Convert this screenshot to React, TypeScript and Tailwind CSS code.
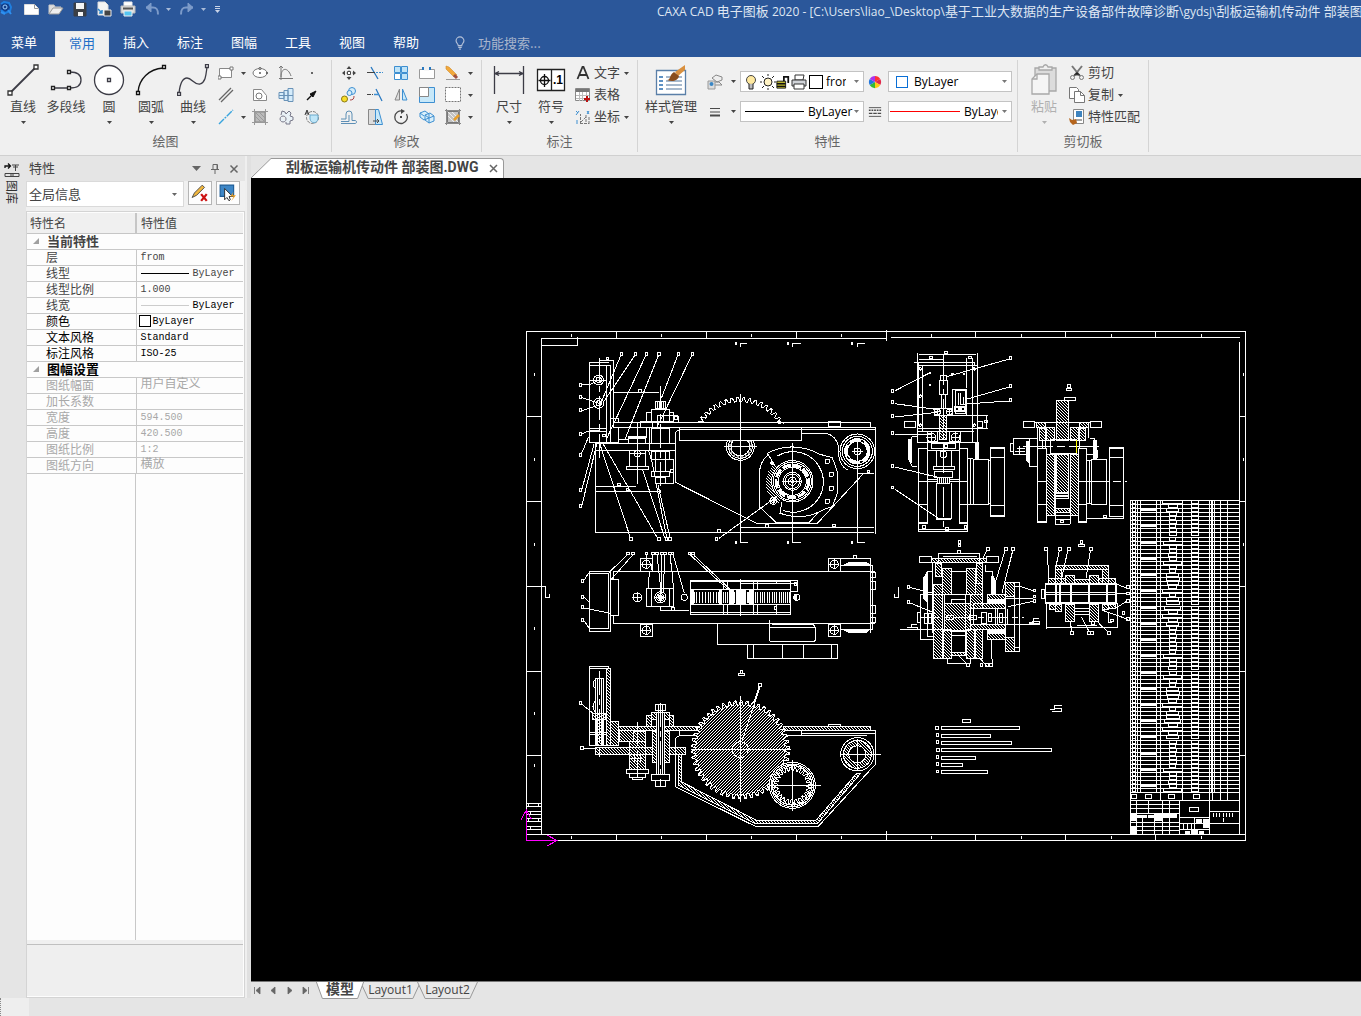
import React from "react";

/* ---------- shared bits ---------- */

const Icon = ({ children, className = "size-4" }: { children: React.ReactNode; className?: string }) => (
  <svg viewBox="0 0 16 16" className={`${className} shrink-0`} fill="none" stroke="#4a4a4a" aria-hidden="true">
    {children}
  </svg>
);

const Caret = ({ className = "text-[#444]" }: { className?: string }) => (
  <svg viewBox="0 0 5 3" className={`h-[3px] w-[5px] shrink-0 ${className}`} fill="currentColor" aria-hidden="true">
    <path d="M0 0h5L2.5 3z" />
  </svg>
);

const BigButton = ({ label, icon, width = "w-[42px]", caret = true, disabled = false }: { label: string; icon: React.ReactNode; width?: string; caret?: boolean; disabled?: boolean }) => (
  <button type="button" disabled={disabled} className={`${width} flex shrink-0 flex-col items-center ${disabled ? "text-[#b0b0b0]" : "text-[#444]"}`}>
    <span className="flex h-9 items-center justify-center">{icon}</span>
    <span className="h-[18px] text-[13px] leading-4 whitespace-nowrap">{label}</span>
    <span className="flex h-3 items-center">{caret && <Caret className={disabled ? "text-[#b0b0b0]" : "text-[#444]"} />}</span>
  </button>
);

const SmallButton = ({ name, children }: { name: string; children: React.ReactNode }) => (
  <button type="button" aria-label={name} className="flex h-[22px] w-[26px] items-center justify-center">
    {children}
  </button>
);

const CaretButton = ({ name }: { name: string }) => (
  <button type="button" aria-label={name} className="flex h-[22px] w-2 items-center justify-center">
    <Caret />
  </button>
);

const RowButton = ({ label, icon, caret = false }: { label: string; icon: React.ReactNode; caret?: boolean }) => (
  <button type="button" className="flex h-[22px] items-center text-[13px] leading-[18px] whitespace-nowrap text-[#444]">
    {icon}
    <span className="ml-[3px] pb-[2px]">{label}</span>
    {caret && <span className="ml-1"><Caret /></span>}
  </button>
);

const Group = ({ title, children, className = "" }: { title: string; children: React.ReactNode; className?: string }) => (
  <section aria-label={title} className="flex shrink-0 py-[3px]">
    <div className="flex flex-col">
      <div className={`flex h-[72px] pt-[2px] ${className}`}>{children}</div>
      <div className="text-center text-[13px] leading-[18px] text-[#666]">{title}</div>
    </div>
    <div className="w-px bg-[#d4d4d4]" />
  </section>
);

const sq = (x: number, y: number, s = 4) => `M${x - s / 2} ${y - s / 2}h${s}v${s}h-${s}z`;

/* ---------- ribbon icons ---------- */

const Large = ({ children }: { children: React.ReactNode }) => (
  <svg viewBox="0 0 32 32" className="size-8" fill="none" stroke="#3c3c46" strokeWidth="1.3" aria-hidden="true">
    {children}
  </svg>
);

const LineIcon = <Large><path d="M4 28L28 4" strokeWidth="1.8" /><path d={sq(3, 29) + sq(29, 3)} fill="#fff" stroke="#333" /></Large>;
const PolyIcon = <Large><path d="M3 24h17c7 0 11-3 11-8s-4-8-11-8" strokeWidth="1.3" /><path d={sq(3, 24, 3) + sq(19, 24, 3) + sq(19, 8, 3)} fill="#fff" stroke="#222" /></Large>;
const CircleIcon = <Large><circle cx="16" cy="16" r="14.5" fill="#fff" /><path d={sq(16, 16, 3)} /></Large>;
const ArcIcon = <Large><path d="M3 28C4 15 14 5 28 4" stroke="#111" /><path d={sq(3, 29, 3) + sq(29, 3, 3)} fill="#fff" stroke="#111" /></Large>;
const CurveIcon = <Large><path d="M2 29C3 20 5 14 10 14s7 7 13 6c6-2 6-10 7-17" /><path d={sq(2, 30, 3) + sq(30, 2, 3)} fill="#fff" /></Large>;
const DimIcon = <Large><path d="M1.500 2v28M30.500 2v28M3 9.500h26M6 7.500l-4 2 4 2M26 7.500l4 2-4 2" /></Large>;
const SymbolIcon = (
  <span className="relative flex">
    <Large><path d="M2.500 5.500h27v21h-27zM16.500 5.500v21" fill="#fff" stroke="#222" /><circle cx="9.500" cy="16.500" r="4" stroke="#111" /><path d="M3.500 16.500h12M9.500 10v13" stroke="#111" /></Large>
    <span className="absolute top-2 right-1 font-['Liberation_Sans'] text-[12px] leading-4 font-bold text-black">.1</span>
  </span>
);
const StyleIcon = (
  <Large>
    <path d="M1.500 6.500h29v24h-29z" fill="#fff" stroke="#5a7fa8" />
    <path d="M4 13h4M4 17h4M4 21h4M4 25h4" stroke="#2a6db0" />
    <path d="M11 13h16M11 17h16M11 21h16M11 25h16" stroke="#8aa3bd" />
    <path d="M20 8L30 1v5l-7 6z" fill="#d9903f" stroke="none" />
    <path d="M12 16c4 0 2-5 7-8l5 4c-1 5-7 6-12 4z" fill="#8a4d1c" stroke="none" />
  </Large>
);
const PasteIcon = (
  <Large>
    <path d="M7 4h21v23H7z" fill="#dcdcdc" stroke="#a8a8a8" />
    <path d="M11 6V3h4c1-3 4-3 5 0h4v3z" fill="#f0f0f0" stroke="#a8a8a8" />
    <path d="M9 10h12v20H4V15z" fill="#f5f5f5" stroke="#a8a8a8" /><path d="M9 10v5H4" stroke="#a8a8a8" />
  </Large>
);

const drawIcons: [string, React.ReactNode][][] = [
  [
    ["矩形", <Icon><path d="M1.500 3.500h12v9h-12z" fill="#fff" stroke="#888" /><path d="M0 11h3v3H0zM12 2h3v3h-3z" fill="#fff" stroke="#777" /></Icon>],
    ["椭圆", <Icon><ellipse cx="8" cy="8" rx="7" ry="4.500" fill="#fff" stroke="#777" /><circle cx="8" cy="8" r=".6" /><circle cx="8" cy="3.500" r="1" fill="#fff" /><circle cx="15" cy="8" r=".7" fill="#fff" /></Icon>],
    ["公式曲线", <Icon><path d="M3 1v14M1 13.500h14M1 3l2-2 2 2M3 12C3 2 10 2 13 11" stroke="#777" /></Icon>],
    ["点", <Icon><path d="M7 7h2v2H7z" fill="#666" stroke="none" /></Icon>],
  ],
  [
    ["平行线", <Icon><path d="M1 13L13 1M3 15L15 3" stroke="#666" strokeWidth="1.300" /></Icon>],
    ["局部放大", <Icon><path d="M1.500 2.500h8l5 6v5h-13z" fill="#fff" stroke="#888" /><circle cx="7" cy="9" r="3" stroke="#777" /></Icon>],
    ["轴", <Icon><path d="M1 5.500h5v6H1zM6 3.500h4v10H6zM10 1.500h5v13h-5zM1 8.500h14" fill="#d5ecfb" stroke="#6a93b8" /></Icon>],
    ["箭头", <Icon><path d="M3 13l5-5" stroke="#111" strokeWidth="1.500" /><path d="M12 4L6 7l3 3z" fill="#111" stroke="#111" /></Icon>],
  ],
  [
    ["中心线", <Icon><path d="M1 15L15 1" stroke="#39a4dd" strokeWidth="1.400" strokeDasharray="7 1 2 1" /></Icon>],
    ["填充", <Icon><path d="M3 3h10v10H3z" fill="#bbb" stroke="#888" /><path d="M3 3l10 10M3 7l6 6M7 3l6 6" stroke="#9a9a9a" /><path d="M2.500 0v16M13.500 0v16M0 2.500h16M0 13.500h16" stroke="#999" /></Icon>],
    ["齿形", <Icon><path d="M3 6l1-4 3 1 1 2 3-3 2 2-1 3 3 1v3l-3 1v3h-4v-2M5 7a3 3 0 1 0 .1 0" fill="#e9f1f6" stroke="#778" /></Icon>],
    ["图库", <Icon><circle cx="8.500" cy="8.500" r="6" strokeDasharray="3 1" stroke="#777" /><path d="M6 6h8v4c-1 5-7 5-8 0z" fill="#bfe6f8" stroke="#6ba9cb" /><path d="M1 6l2-5 2 5M2 4h2" stroke="#333" /></Icon>],
  ],
];

const B = "#3d8fd1";
const modifyIcons: [string, React.ReactNode][][] = [
  [
    ["平移", <Icon><path d="M8 3v10M3 8h10" stroke="#999" strokeDasharray="1 1" /><path d="M8 1L5.500 4h5zM8 15l-2.500-3h5zM1 8l3-2.500v5zM15 8l-3-2.500v5z" fill="#444" stroke="none" /><path d="M6.500 6.500h3v3h-3z" fill="#fff" /></Icon>],
    ["裁剪", <Icon><path d="M4 2l7 12" stroke="#2878c0" strokeWidth="1.300" /><path d="M0 7.500h8" stroke="#444" /><path d="M9 7.500h7" stroke={B} strokeDasharray="2 1" /></Icon>],
    ["阵列", <Icon><path d="M1.500 1.500h6v6h-6zM8.500 1.500h6v6h-6zM8.500 8.500h6v6h-6z" fill="#bfe3f7" stroke={B} /><path d="M1.500 8.500h6v6h-6z" fill="#fff" stroke={B} /></Icon>],
    ["打断", <Icon><path d="M.500 4.500h15v9H.500z" fill="#fff" stroke="#999" /><path d="M5 4.500h5" stroke="#f0f0f0" strokeWidth="2" /><path d="M4 2v3M11 2v3" stroke="#2878c0" strokeWidth="2" /></Icon>],
    ["删除", <Icon><path d="M1 1l3 1 8 8-3 2-8-8z" fill="#f2a93b" stroke="#d08a2c" strokeWidth=".6" /><path d="M9 10l3 3" stroke="#a05040" strokeWidth="3" /><path d="M1 14.500h14" stroke="#999" /></Icon>],
  ],
  [
    ["复制", <Icon><circle cx="11" cy="4" r="3.500" fill="#d5edfa" stroke={B} /><circle cx="8.500" cy="6" r="2.500" fill="#d5edfa" stroke={B} /><circle cx="3.500" cy="12" r="3" fill="#f7de2c" stroke="#8a7a14" /><path d="M9 13c3 0 4-1 4-4" stroke="#a44" /></Icon>],
    ["延伸", <Icon><path d="M9 2l6 12" stroke="#2878c0" strokeWidth="1.300" /><path d="M0 7.500h6" stroke="#444" strokeDasharray="4 1" /><path d="M7 7.500h5" stroke={B} strokeWidth="1.500" /></Icon>],
    ["镜像", <Icon><path d="M6.500 2v11H2z" fill="#ddd" stroke="#888" /><path d="M9.500 2v11H14z" fill="#cbe9f9" stroke={B} /></Icon>],
    ["缩放", <Icon><path d="M.500.500h15v15H.500z" fill="#c7e8f9" stroke={B} /><path d="M.500.500h9v9h-9z" fill="#fff" stroke="#888" /></Icon>],
    ["拉伸框", <Icon><path d="M.500.500h15v14H.500z" fill="#fff" stroke="#777" strokeDasharray="2 1" /></Icon>],
  ],
  [
    ["偏移", <Icon><path d="M0 14.500h14c2 0 2-3 0-3h-3V5a3 3 0 0 0-6 0v5H0M0 12.500h8V6" stroke="#5d8fb5" /></Icon>],
    ["拉伸", <Icon><path d="M1.500.500h7v15h-7z" fill="#ddd" stroke="#888" /><path d="M8.500.500h3l4 15h-7z" fill="#c7e8f9" stroke={B} /><path d="M6 12h6M10 10l2 2-2 2" /></Icon>],
    ["旋转", <Icon><path d="M10 2.200A6.300 6.300 0 1 0 13.500 5" strokeWidth="1.300" /><path d="M8 0l4 2-4 3z" fill="#444" stroke="none" /><path d="M7 7h2v2H7z" fill="#444" stroke="none" /></Icon>],
    ["三维", <Icon><path d="M1 4l5-2 4 3v4l-5 2-4-3zM6 6l5-2 4 3v5l-5 2-4-3zM6 6l4 3 5-2M10 9v5M1 4l4 3" fill="#d8effb" stroke={B} /></Icon>],
    ["编辑", <Icon><path d="M2.500 2.500h11v11h-11z" fill="#c4c4c4" stroke="#777" /><path d="M3 3l10 10M3 7l6 6M7 3l6 6" stroke="#eee" /><path d="M0 1.500h16M1.500 0v16M0 14.500h16M14.500 0v16" stroke="#888" /><path d="M9 11l5-5" stroke="#e8a02c" strokeWidth="2.500" /></Icon>],
  ],
];

/* ---------- header ---------- */

const quick: [string, React.ReactNode][] = [
  ["新建", <Icon><path d="M.500 3.500h10l4 4v6H.500z" fill="#fff" stroke="#ddd" /><path d="M10.500 3.500v4h4" stroke="#999" /></Icon>],
  ["打开", <Icon><path d="M1 13V4h5l1 2h6v2" fill="#ddd" stroke="#ccc" /><path d="M1 13l4-6h10l-4 6z" fill="#eee" stroke="#999" /></Icon>],
  ["保存", <Icon><path d="M2 2h12v13H2z" fill="#3b3f46" stroke="#3b3f46" /><path d="M4 2h8v6H4zM6 11h5v4H6z" fill="#f4f4f4" stroke="none" /></Icon>],
  ["另存", <Icon><path d="M2 1h7l3 3v10H2z" fill="#f4f4f4" stroke="#ddd" /><path d="M2 8l4 4M6 9v3H3" stroke="#2e84c8" strokeWidth="1.500" /><path d="M8 9h7v6H8z" fill="#444" stroke="#eee" /></Icon>],
  ["打印", <Icon><path d="M4 1h8v4H4z" fill="#fff" stroke="#eee" /><path d="M1 5h14v7H1z" fill="#dcdcdc" stroke="#bbb" /><path d="M3 7.500h10" stroke="#555" strokeWidth="2" /><path d="M4 10h8v5H4z" fill="#56c6f2" stroke="#eee" /></Icon>],
];

const menus = ["常用", "插入", "标注", "图幅", "工具", "视图", "帮助"];

const Undo = ({ flip = false }: { flip?: boolean }) => (
  <Icon className={flip ? "size-4 -scale-x-100" : "size-4"}>
    <path d="M2 6.500h7c4 0 5 2 5 7" stroke="#7d9bc9" strokeWidth="2" />
    <path d="M7 2L2 6.500 7 11z" fill="#7d9bc9" stroke="#7d9bc9" />
  </Icon>
);

const En = ({ children }: { children: React.ReactNode }) => <span className="text-[12px]">{children}</span>;

const Header = () => (
  <header className="h-[57px] shrink-0 overflow-hidden bg-[#2b579a] text-white">
    <div className="flex h-[31px] items-start">
      <div className="flex h-[18px] w-[657px] shrink-0 items-center">
        <Icon className="size-4"><path d="M1 3l3-2 5 1 2 4-1 4-5 2-4-3" fill="#123f8c" stroke="#1f7fe0" strokeWidth="2" /><path d="M8 9l3 4M1 11l4 2" stroke="#2f90f0" strokeWidth="2" /><circle cx="5" cy="6" r="2" stroke="#9bd0ff" /></Icon>
        <div className="ml-2 flex gap-2">
          {quick.map(([n, ic]) => <button key={n} type="button" aria-label={n}>{ic}</button>)}
        </div>
        <button type="button" aria-label="撤销" className="ml-2 flex items-center gap-[6px]"><Undo /><Caret className="text-[#a9bbd8]" /></button>
        <button type="button" aria-label="重做" className="ml-2 flex items-center gap-[6px]"><Undo flip /><Caret className="text-[#a9bbd8]" /></button>
        <button type="button" aria-label="自定义" className="ml-[9px] flex flex-col items-center gap-px"><span className="h-px w-[5px] bg-[#c9d4e8]" /><span className="h-px w-[5px] bg-[#c9d4e8]" /><Caret className="text-[#c9d4e8]" /></button>
      </div>
      <h1 className="h-[22px] min-w-0 overflow-hidden font-['Open_Sans','Noto_Sans_CJK_SC',sans-serif] text-[13px] leading-[22px] whitespace-nowrap text-[#dfe6f2]">
        <En>CAXA CAD </En>电子图板<En> 2020 - [C:\Users\liao_\Desktop\</En>基于工业大数据的生产设备部件故障诊断<En>\gydsj\</En>刮板运输机传动件 部装图<En>.DWG]</En>
      </h1>
    </div>
    <nav className="flex h-[26px] text-[13px] leading-[22px]">
      <button type="button" className="mr-[7px] w-12 pb-1">菜单</button>
      {menus.map((m, i) => (
        <button key={m} type="button" className={i === 0 ? "w-[54px] border border-b-0 border-[#e8e8e8] bg-[#f0f0f0] pb-1 leading-5 text-[#1e6fc8]" : "w-[54px] pb-1"}>{m}</button>
      ))}
      <label className="ml-5 flex items-center gap-[11px] pb-[2px]">
        <Icon className="size-[14px]"><path d="M6 11C6 9 3.500 8 3.500 5.500a4.500 4.500 0 0 1 9 0C12.500 8 10 9 10 11zM6 13h4M7 15h2" stroke="#b5c1d8" strokeWidth="1.300" /></Icon>
        <input aria-label="功能搜索" placeholder="功能搜索..." className="w-24 bg-transparent text-[13px] leading-[22px] text-white outline-none placeholder:text-[#a9b5cc]" />
      </label>
    </nav>
  </header>
);

/* ---------- ribbon ---------- */

const comboBox = "flex h-[21px] w-[124px] items-center border border-[#c3c3c3] bg-white pr-1 font-['Open_Sans',sans-serif] text-[12px] text-black";
const bareSelect = "min-w-0 flex-1 appearance-none overflow-hidden bg-transparent p-0 text-[12px] leading-[19px] outline-none";

const Ribbon = () => (
  <div className="flex h-[99px] shrink-0 overflow-hidden border-b border-[#d0d0d0] bg-[#f0f0f0]">
    <Group title="绘图" className="pr-[6px] pl-[2px]">
      <BigButton label="直线" icon={LineIcon} />
      <BigButton label="多段线" icon={PolyIcon} width="w-11" caret={false} />
      <BigButton label="圆" icon={CircleIcon} />
      <BigButton label="圆弧" icon={ArcIcon} />
      <BigButton label="曲线" icon={CurveIcon} />
      <div className="-ml-px flex flex-col">
        {drawIcons.map((row, r) => (
          <div key={r} className="flex">
            <SmallButton name={row[0][0]}>{row[0][1]}</SmallButton>
            {r === 1 ? <span className="w-2" /> : <CaretButton name={`${row[0][0]}选项`} />}
            {row.slice(1).map(([n, ic]) => <SmallButton key={n} name={n}>{ic}</SmallButton>)}
          </div>
        ))}
      </div>
    </Group>
    <Group title="修改" className="pr-[7px] pl-1">
      <div className="flex flex-col">
        {modifyIcons.map((row, r) => (
          <div key={r} className="flex">
            {row.map(([n, ic]) => <SmallButton key={n} name={n}>{ic}</SmallButton>)}
            <CaretButton name={`${row[4][0]}选项`} />
          </div>
        ))}
      </div>
    </Group>
    <Group title="标注" className="pr-2 pl-[6px]">
      <BigButton label="尺寸" icon={DimIcon} />
      <BigButton label="符号" icon={SymbolIcon} />
      <div className="ml-[3px] flex flex-col">
        <RowButton label="文字" caret icon={<Icon><path d="M2.500 14L7.500 2h1L13.500 14M4.500 10h7" stroke="#333" strokeWidth="1.800" /></Icon>} />
        <RowButton label="表格" icon={<Icon><path d="M.500 1.500h14v12H.500z" fill="#fff" stroke="#888" /><path d="M1 2h13v3H1z" fill="#777" stroke="none" /><path d="M1 8.500h13M1 11.500h13M4.500 5v9M7.500 5v9M11.500 5v9" stroke="#bbb" /><path d="M12 9v6M9 12h6" stroke="#b11" strokeWidth="2" /></Icon>} />
        <RowButton label="坐标" caret icon={<Icon><path d="M1 2l2 2M4 2L1 6M2 11v4M12 2l2 3M14 2l-2 3" stroke={B} /><path d="M5.500 15V5M5 14.500h9M6 13l5-5M11 6v9M14 8v7" stroke="#777" strokeDasharray="3 1" /></Icon>} />
      </div>
    </Group>
    <Group title="特性" className="pr-[5px] pl-1">
      <BigButton label="样式管理" icon={StyleIcon} width="w-[58px]" />
      <div className="ml-[7px] flex flex-col gap-[9px] pt-[9px]">
        <div className="flex h-[21px] items-center">
          <Icon><path d="M5 4l4-3 6 2v3l-5 2zM4 8h8l3 3H6z" fill="#eee" stroke="#888" /><path d="M1 7h7v8H1z" fill="#ddd" stroke="#999" /><circle cx="4.500" cy="10" r="2" fill="#3a86c4" stroke="none" /></Icon>
          <span className="mr-1 ml-2"><Caret /></span>
          <label className={comboBox}>
            <Icon className="ml-[2px] size-4"><circle cx="8" cy="6" r="4.500" fill="#ffe9a0" stroke="#444" /><path d="M6 10v5h4v-5" fill="#bbb" stroke="#222" /></Icon>
            <Icon className="ml-px size-4"><circle cx="8" cy="8" r="4" fill="#fff3c4" stroke="#222" /><path d="M8 0v2M8 14v2M0 8h2M14 8h2M2 2l2 2M12 12l2 2M2 14l2-2M12 4l2-2" stroke="#222" /></Icon>
            <Icon className="size-[14px]"><path d="M1 7h10v8H1z" fill="#b9b42c" stroke="#111" /><path d="M1 10h10M1 13h10" stroke="#111" strokeWidth="1.500" /><path d="M9 7V2h5v7" stroke="#111" strokeWidth="2" /></Icon>
            <Icon className="ml-px size-4"><path d="M4 1h9l-1 5H4z" fill="#fff" stroke="#333" /><path d="M1 6h14v6H1z" fill="#d0d3d8" stroke="#333" /><path d="M3 10h10v5H3z" fill="#fff" stroke="#333" /></Icon>
            <span className="ml-[2px] size-[14px] shrink-0 border border-black bg-white" />
            <select aria-label="图层" className={`${bareSelect} ml-[3px]`}><option>from</option></select>
            <span className="ml-2"><Caret className="text-[#777]" /></span>
          </label>
          <Icon className="mr-[6px] ml-1 size-[14px]"><path d="M8 8V1A7 7 0 0 1 14 4.500z" fill="#f33" stroke="none" /><path d="M8 8l6-3.500a7 7 0 0 1 0 7z" fill="#e22a4c" stroke="none" /><path d="M8 8l6 3.500A7 7 0 0 1 8 15z" fill="#fc1" stroke="none" /><path d="M8 8v7a7 7 0 0 1-6-3.500z" fill="#3b3" stroke="none" /><path d="M8 8l-6 3.500a7 7 0 0 1 0-7z" fill="#27d" stroke="none" /><path d="M8 8L2 4.500A7 7 0 0 1 8 1z" fill="#a3e" stroke="none" /></Icon>
          <label className={comboBox}>
            <span className="ml-[7px] size-3 shrink-0 border border-[#0a6fd6] bg-white" />
            <select aria-label="颜色" className={`${bareSelect} ml-[6px]`}><option>ByLayer</option></select>
            <Caret className="text-[#777]" />
          </label>
        </div>
        <div className="flex h-[21px] items-center">
          <Icon><path d="M3 4.500h10M3 8h10" /><path d="M3 11.500h10" strokeWidth="2" /></Icon>
          <span className="mr-1 ml-2"><Caret /></span>
          <label className={comboBox}>
            <span className="mr-1 ml-1 h-px w-[59px] shrink-0 bg-black" />
            <select aria-label="线型" className={bareSelect}><option>ByLayer</option></select>
            <Caret className="text-[#777]" />
          </label>
          <Icon className="mr-[6px] ml-1 size-[14px]"><path d="M1 3h14M1 13h14" /><path d="M1 6h14" strokeDasharray="2 1" strokeWidth="1.500" /><path d="M1 9.500h14" strokeDasharray="4 1" strokeWidth="1.500" /></Icon>
          <label className={comboBox}>
            <span className="mr-1 ml-px h-px w-[70px] shrink-0 bg-[#ff0000]" />
            <select aria-label="线宽" className={bareSelect}><option>ByLayer</option></select>
            <span className="ml-1"><Caret className="text-[#777]" /></span>
          </label>
        </div>
      </div>
    </Group>
    <Group title="剪切板" className="pr-2 pl-[5px]">
      <BigButton label="粘贴" icon={PasteIcon} disabled />
      <div className="ml-1 flex flex-col">
        <RowButton label="剪切" icon={<Icon><path d="M3 1l8 10M13 1L5 11" stroke="#777" strokeWidth="2" /><circle cx="3.500" cy="12.500" r="2" stroke="#777" /><circle cx="12.500" cy="12.500" r="2" stroke="#777" /><path d="M5 10l3-3 3 3z" fill="#222" /></Icon>} />
        <RowButton label="复制" caret icon={<Icon><path d="M.500.500h7l2 2v9h-9z" fill="#fff" stroke="#777" /><path d="M5.500 4.500h6l4 4v7h-10z" fill="#fff" stroke="#777" /><path d="M11.500 4.500v4h4" stroke="#777" /></Icon>} />
        <RowButton label="特性匹配" icon={<Icon><path d="M4.500.500h10v14h-10z" fill="#fff" stroke="#888" /><path d="M7 2h6v6H7z" fill="#3f84bf" stroke="none" /><path d="M7 11h6" /><path d="M0 9l3 2 4-1 1 4-4 2-3-3z" fill="#b5651d" stroke="none" /></Icon>} />
      </div>
    </Group>
  </div>
);

/* ---------- property panel ---------- */

type Prop = { name: string; value?: React.ReactNode; head?: boolean; tone?: string };
const mono = "font-['Liberation_Mono','Noto_Sans_CJK_SC',monospace] text-[10px]";
const props: Prop[] = [
  { name: "当前特性", head: true, tone: "text-[#444]" },
  { name: "层", value: "from", tone: "text-[#444]" },
  { name: "线型", value: <span className="flex items-center gap-1"><span className="h-px w-12 bg-black" />ByLayer</span>, tone: "text-[#444]" },
  { name: "线型比例", value: "1.000", tone: "text-[#444]" },
  { name: "线宽", value: <span className="flex items-center gap-1 text-black"><span className="h-px w-12 bg-[#ccc]" />ByLayer</span>, tone: "text-[#444]" },
  { name: "颜色", value: <span className="-ml-[2px] flex items-center gap-[2px]"><span className="size-3 border border-black bg-white" />ByLayer</span>, tone: "text-black" },
  { name: "文本风格", value: "Standard", tone: "text-black" },
  { name: "标注风格", value: "ISO-25", tone: "text-black" },
  { name: "图幅设置", head: true, tone: "text-black" },
  { name: "图纸幅面", value: <span className="block h-[15px] text-[12px] leading-[14px]">用户自定义</span>, tone: "text-[#a8a8a8]" },
  { name: "加长系数", value: "", tone: "text-[#a8a8a8]" },
  { name: "宽度", value: "594.500", tone: "text-[#a8a8a8]" },
  { name: "高度", value: "420.500", tone: "text-[#a8a8a8]" },
  { name: "图纸比例", value: "1:2", tone: "text-[#a8a8a8]" },
  { name: "图纸方向", value: <span className="block h-[15px] text-[12px] leading-[14px]">横放</span>, tone: "text-[#a8a8a8]" },
];

const Panel = () => (
  <aside className="flex w-[219px] shrink-0 flex-col">
    <div className="flex h-[25px] items-center pr-[6px] pl-[3px] text-[13px] leading-[18px] text-[#444]">
      <h2 className="flex-1 pb-[2px]">特性</h2>
      <div className="flex items-center gap-[9px]">
        <button type="button" aria-label="选项"><svg viewBox="0 0 9 5" className="h-[5px] w-[9px]" fill="#666"><path d="M0 0h9L4.500 5z" /></svg></button>
        <button type="button" aria-label="固定"><svg viewBox="0 0 10 10" className="size-[10px]" fill="none" stroke="#666"><path d="M3 .500h4.500v5H3zM1 5.500h8M5 6v4M7 1v4" /></svg></button>
        <button type="button" aria-label="关闭"><svg viewBox="0 0 10 10" className="size-[10px]" fill="none" stroke="#666" strokeWidth="1.500"><path d="M1.500 1.500l7 7M8.500 1.500l-7 7" /></svg></button>
      </div>
    </div>
    <div className="flex h-[30px] items-start gap-1 bg-[#f0f0f0]">
      <label className="flex h-[26px] w-[158px] items-center border border-[#dadada] bg-white pr-[6px] pl-[2px]">
        <select aria-label="对象" className="min-w-0 flex-1 appearance-none bg-transparent text-[13px] leading-6 text-[#444] outline-none"><option>全局信息</option></select>
        <Caret className="text-[#666]" />
      </label>
      <button type="button" aria-label="清除" className="flex size-[24px] items-center justify-center border border-[#b5b5b5] bg-[#fdfdfd]"><Icon className="size-[18px]"><path d="M1 12l2-4 7-7 2 2-7 7z" fill="#f1b73e" stroke="#444" strokeWidth=".8" /><path d="M9 9l5 6M14 9l-5 6" stroke="#c11" strokeWidth="2" /></Icon></button>
      <button type="button" aria-label="快速选择" className="flex size-[24px] items-center justify-center border border-[#b5b5b5] bg-[#fdfdfd]"><Icon className="size-[18px]"><path d="M1 1h12v10H1z" fill="#3d86c6" stroke="#1d5c96" /><path d="M5 4v10l2-2 2 3 1-1-1-3h3z" fill="#fff" stroke="#222" strokeWidth=".8" /><path d="M13 7l-3 4h3l-2 4 4-5h-3z" fill="#f6a21c" stroke="none" /></Icon></button>
    </div>
    <div className="flex min-h-0 flex-1 flex-col border border-[#d4d4d4] bg-[#fdfdfd] p-px pl-0">
      <table className="w-full table-fixed border-collapse text-[12px] leading-[15px]">
        <colgroup><col className="w-[109px]" /><col /></colgroup>
        <thead>
          <tr className="h-5 border-b border-[#c6c6c6] bg-[#f0f0f0] text-left text-[#444]">
            <th className="border-r-2 border-[#c6c6c6] pl-[3px] font-normal">特性名</th>
            <th className="pl-1 font-normal">特性值</th>
          </tr>
        </thead>
        <tbody>
          {props.map((p) => (
            <tr key={p.name} className={`h-4 border-b border-[#c8c8c8] ${p.tone}`}>
              {p.head ? (
                <th colSpan={2} className="p-0 text-left align-top font-bold">
                  <button type="button" className="flex h-[15px] items-center gap-[8px] pl-[6px]"><svg viewBox="0 0 6 6" className="size-[6px]" fill="#a0a0a0"><path d="M6 0v6H0z" /></svg><span className="pb-[2px] text-[13px] leading-[13px]">{p.name}</span></button>
                </th>
              ) : (
                <>
                  <td className="border-r border-[#c8c8c8] py-0 pl-[19px] align-top"><span className="block h-[15px] leading-[13px]">{p.name}</span></td>
                  <td className={`py-0 pl-1 align-top ${mono}`}>{p.value}</td>
                </>
              )}
            </tr>
          ))}
        </tbody>
      </table>
      <div className="grid flex-1 grid-cols-[109px_1fr]"><div className="border-r border-[#c8c8c8]" /></div>
      <div className="h-1 bg-[#f0f0f0]" />
      <div className="h-[52px] border-t border-[#c0c0c0] bg-[#efefef]" />
    </div>
  </aside>
);

/* ---------- drawing ---------- */

type Pt = [number, number];
type Box = [number, number, number, number];
const marks = (pts: Pt[]) => pts.map(([x, y]) => `M${x - 4} ${y - 4}h8v8h-8z`).join("");
const boxes = (list: Box[]) => list.map(([a, b, c, d]) => `M${a} ${b}H${c}V${d}H${a}z`).join("");
const cross = (pts: Pt[], r: number) => pts.map(([x, y]) => `M${x - r} ${y}h${2 * r}M${x} ${y - r}v${2 * r}`).join("");
const gear = (cx: number, cy: number, ro: number, ri: number, n: number, from = 0, to = 360) => {
  let d = "";
  const step = 360 / n;
  for (let a = from; a < to; a += step) {
    ([[ri, 0], [ri, 0.3], [ro, 0.5], [ro, 0.75]] as Pt[]).forEach(([r, f]) => {
      const t = ((a + f * step) * Math.PI) / 180;
      d += `${d ? "L" : "M"}${(cx + r * Math.cos(t)).toFixed(1)} ${(cy + r * Math.sin(t)).toFixed(1)}`;
    });
  }
  return d;
};
const rings = (cx: number, cy: number, rs: number[]) => rs.map((r) => <circle key={r} cx={cx} cy={cy} r={r} />);
const wave = [60, 26, 36, 20, 18, 20, 18, 20, 22, 18, 56, 22, 20, 24, 20, 54, 20, 18, 36, 40, 32, 24, 60, 18, 36, 40, 48, 26];
const rowTop = 500;
const rows = Array.from({ length: 72 }, (_, i) => rowTop + Math.round(i * 4.06));

const hatch = "url(#hatchA)";
const hatchB = "url(#hatchB)";

const SideView = () => (
  <g transform="translate(520 325) scale(.33333)">
    <path d="M208 352V112H266M208 121H272V352M260 121V352M238 106H281V308M208 310H260M208 320H260M208 352H296V308M271 280H296V292M208 166H260" />
    <path d="M238 100V408M352 290V486M421 183V504" strokeDasharray="24 4 6 4" />
    {rings(236, 165, [15, 8])}{rings(236, 235, [15, 8])}
    <path d={marks([[305, 88], [347, 88], [380, 88], [418, 88], [476, 88], [518, 88], [182, 180], [182, 216], [182, 255], [182, 328], [182, 390], [182, 496], [182, 543], [334, 642], [417, 642], [440, 642], [451, 642], [590, 642], [360, 199], [263, 101], [298, 479], [323, 494], [597, 619], [741, 604], [942, 602], [1046, 440], [253, 332], [469, 280], [457, 438]])} />
    <path d="M302 92L240 240M344 92L250 232M377 92L258 345M415 92L314 345M473 92L424 220M515 92L412 305M187 180L210 178L236 165M187 218L236 235M187 257L236 240M186 326L206 318H240M184 387L206 335M186 492L222 358M186 540L230 358M331 638L240 358M412 638L250 358M434 638L368 435M440 638L394 400M450 638L414 480M597 640L770 515" />
    <path d="M281 202H416M227 484H348M227 499H416M227 355V625M227 623H1062M661 607H1062M1012 445H1062" />
    <path d={boxes([[406, 229, 436, 250], [394, 254, 448, 290], [379, 262, 394, 290], [448, 262, 460, 290], [281, 292, 1052, 307], [925, 289, 962, 305], [362, 290, 397, 307], [394, 310, 448, 355], [328, 377, 377, 424], [319, 424, 386, 434], [325, 338, 377, 355], [394, 380, 448, 404], [406, 404, 436, 440], [394, 440, 448, 455], [406, 457, 436, 475]])} />
    <path d="M412 230v20M418 230v20M424 230v20M430 230v20M410 272H475M412 272V305M430 272V290M475 272V290M296 344H325M379 307V340M388 310V377M227 355H466M227 377H466M386 377L394 404M408 475H460V404H448M406 380V404M436 380V404" />
    <path d="M466 307H1067V626M478 310V346H845V310M478 314H1067M466 472V328Q466 320 478 314M845 325H915Q950 330 956 370M466 472L710 595H892L1030 446" />
    <path d="M325 338h52" strokeWidth="3" /><path d={cross([[352, 386]], 22)} />{rings(352, 386, [9])}
    <path d={gear(661, 364, 146, 134, 50, 212, 330)} /><path d="M533 290H550M770 290H783" />
    <path d="M623 346A42 42 0 1 0 699 346M630 346A36 36 0 1 0 692 346M640 346A28 28 0 1 0 682 346M612 364H712" />
    <path d="M635 346A32 32 0 1 0 687 346" stroke="#aaa" strokeWidth="2" strokeDasharray="2 2" />
    <path d="M661 208V652H684M817 355V652H843M1012 340V652H1034M661 67V55H680M817 67V55H842M1012 67V55H1034" />
    <path d="M647 51v10M804 51v10M995 51v10M647 648v8M804 648v8M996 648v8" strokeWidth="2" />
    <g>{rings(817, 469, [62, 57, 42, 27, 22, 12, 5])}<circle cx="817" cy="469" r="49" strokeWidth="3" strokeDasharray="9 2" /></g>
    <path d={cross([[817, 469]], 30)} />
    <path d="M764 428A66 66 0 0 0 780 530" stroke={hatch} strokeWidth="6" />
    <path d="M742 385Q817 345 900 388L937 398L952 440V505L937 545L912 553Q850 590 780 565L786 530M742 385L770 430M745 390Q718 410 718 450V545L768 592H868L895 562" />
    <path d="M772 393A91 91 0 1 1 790 557" />
    {rings(922, 409, [7])}{rings(934, 448, [7])}{rings(934, 490, [7])}{rings(922, 529, [7])}
    <circle cx="757" cy="415" r="5" fill="#fff" />{rings(760, 528, [10, 5])}<path d={cross([[760, 528]], 12)} />
    {rings(1012, 379, [52, 45, 38, 30, 10])}<circle cx="1012" cy="379" r="34" strokeWidth="2" strokeDasharray="12 3" /><path d={cross([[1012, 379]], 16)} />
    <path d="M956 370Q952 420 985 436" />
  </g>
);

const EndViews = () => (
  <g transform="translate(880 325) scale(.33333)">
    <path d="M112 84V352H296M292 84V350M116 88H287M116 103H190M102 112H284V122M112 121H292M127 121V318M260 100V190M277 100V352M112 310H323M112 320H282M217 271H323M319 271V310M116 112V300" />
    <path d="M190 90V610" strokeDasharray="30 4 6 4" />
    <path d={boxes([[217, 193, 260, 271], [226, 196, 257, 266], [182, 153, 200, 166], [178, 166, 203, 208], [163, 250, 217, 271], [73, 289, 106, 307], [293, 289, 308, 307], [160, 424, 223, 434], [163, 440, 217, 457], [172, 457, 208, 475], [280, 403, 326, 538], [331, 367, 374, 575], [142, 352, 238, 377], [154, 355, 228, 370], [142, 320, 172, 350], [208, 320, 242, 350]])} />
    <path d="M184 208V250M196 208V250M178 475V457M184 475V457M196 475V457M202 475V457M235 205V240M242 205V240M250 215V240" />
    <path d={boxes([[225, 245, 237, 259], [244, 245, 254, 259]])} strokeWidth="2" />
    <path d="M180 271H200V345H180z" fill={hatch} />
    {rings(172, 261, [9])}{rings(208, 261, [9])}{rings(154, 337, [13])}{rings(227, 337, [13])}{rings(190, 388, [10])}
    <path d={cross([[172, 261], [208, 261]], 11) + cross([[154, 337], [227, 337]], 15)} />
    <path d="M121 127l4 4-4 4-4-4zM121 210l4 4-4 4-4-4zM121 297l4 4-4 4-4-4zM283 127l4 4-4 4-4-4zM283 297l4 4-4 4-4-4z" />
    <path d="M147 143h6M148 181h6M214 148h8M250 148h6" strokeWidth="2" />
    <path d="M112 334H97L88 350V408L97 424H112" /><path d="M87 345H95V412H91L87 405zM286 352H296V402H286z" fill="#fff" />
    <path d="M115 370V620H263V370M115 370H142V595H115M263 370H238V595H263M169 377V425M214 377V425M142 463H172M208 463H238M115 469H172M208 469H263M115 538H142M238 538H263M169 475V580H214V475M115 613H263M263 402H280M263 538H280M271 402V538M326 406H331M326 535H331M331 397H374M331 541H374" />
    <path d="M115 594H142M238 594H263M169 583H214M331 370H374M331 572H374" strokeWidth="2" />
    <path d={marks([[198, 83], [154, 98], [271, 98], [319, 290], [199, 364], [133, 607], [201, 613], [257, 607], [38, 198], [38, 231], [38, 273], [38, 324], [38, 423], [38, 488], [392, 99], [392, 183], [392, 225], [239, 652], [239, 662], [567, 184], [605, 652], [675, 575], [547, 590]])} />
    <path d="M559 190h16v6h-16zM597 658h16v6h-16z" />
    <path d="M44 198L150 143M44 236L175 254M44 276L170 262M44 328H155M44 426L175 457M44 492L175 580M388 102L200 155M388 186L262 222M388 228L240 238" />

    <g fill={hatch}>
      <path d={boxes([[529, 226, 566, 346], [469, 293, 496, 307], [478, 310, 496, 346], [500, 307, 525, 346], [571, 307, 596, 346], [599, 293, 626, 307], [600, 310, 617, 346], [499, 388, 523, 571], [573, 388, 596, 571], [529, 388, 566, 502], [526, 550, 570, 562]])} />
    </g>
    <path d={boxes([[553, 217, 587, 226], [430, 290, 463, 307], [632, 290, 665, 307], [400, 340, 448, 388], [391, 355, 400, 380], [472, 370, 499, 592], [596, 370, 620, 592], [512, 343, 590, 386], [636, 403, 680, 538], [688, 367, 731, 575], [526, 505, 566, 522]])} />
    <path d="M463 293H632M496 293V370M626 293V340M600 293V370M472 307V370M448 340H472M448 388V424H472M487 346V370M630 340H645V388H620M652 400V375M526 386V598M571 386V598M500 571H596M526 584H571M526 598H571M499 592H472M628 406V535M620 406H636M620 535H636M688 397H731M688 541H731M620 580H731V575M472 469H499M472 538H499M596 538H620M406 380h28M412 372h22M420 364v24" />
    <path d="M439 350H448V415L439 405zM641 346H650V402H641z" fill="#fff" />
    <path d="M526 512H566M472 592H499M596 592H620M688 370H731" strokeWidth="2" />
    <path d="M430 364H660M596 469H741" strokeDasharray="30 4 8 4" />
    <path d="M589 346V384" stroke="#ff0" />
  </g>
);

const rack = [525, 531, 538, 547, 556, 565, 571, 580, 589, 595, 612, 618, 624, 643, 683, 686, 706, 712, 721, 727, 733, 742, 748, 757, 763, 769, 778, 784, 790, 796, 802, 808];

const LowerViews = () => (
  <g transform="translate(520 540) scale(.33333)">
    <path d={boxes([[208, 94, 272, 274], [272, 118, 296, 226], [361, 55, 397, 94], [361, 253, 397, 290], [925, 55, 962, 94], [925, 253, 962, 290], [379, 145, 460, 200], [511, 121, 812, 223], [812, 121, 832, 154], [682, 313, 953, 355], [1052, 97, 1066, 112], [1052, 124, 1066, 148], [1052, 196, 1066, 220], [1052, 232, 1066, 248]])} />
    <path d="M208 100H266V265H208M281 118V94H1064M281 226V250H1064M1052 55V280M962 55H1052M962 76H1058V268H962M394 145V200M448 145V200M388 94L385 145M457 94L460 145M421 200V212H508M661 118V228M511 125H812M511 150H812M511 193H812M511 218H812M661 130H832M610 125V150M622 125V150M700 125V150M712 125V150M610 193V223M622 193V223M700 193V223M712 193V223M769 121V130M769 193V223" />
    <path d="M592 250V313H682M700 313V355M787 313V355M850 313V355M934 313V355M748 240V300Q748 304 755 304H880Q886 304 886 298V262L880 253H755M748 262H886M65 139H76V172H88V163" />
    <path d={rack.map((x) => `M${x} 155V190`).join("")} />
    <path d="M650 153H678V192H650zM628 153H640V192H628zM690 153H700V192H690zM600 153H606V192H600zM514 153H520V192H514z" fill="#fff" />
    <path d="M985 68H1040L1050 76H970zM970 268H1050L1040 277H985z" fill="#fff" />
    {rings(379, 73, [12])}{rings(379, 271, [12])}{rings(943, 73, [12])}{rings(943, 271, [12])}{rings(352, 172, [13])}{rings(421, 172, [17, 11])}{rings(493, 172, [9])}
    <circle cx="421" cy="172" r="6" fill="#fff" /><path d="M830 163A9 9 0 0 0 830 181z" fill="#fff" />{rings(830, 172, [9])}
    <path d={cross([[379, 73], [379, 271], [943, 73], [943, 271], [352, 172], [421, 172]], 15)} />
    <path d={marks([[324, 41], [340, 41], [380, 41], [399, 41], [411, 41], [426, 41], [436, 41], [450, 41], [458, 41], [509, 41], [520, 41], [188, 123], [188, 171], [188, 201], [188, 240], [1005, 52], [827, 133], [767, 205], [460, 208], [720, 436], [665, 396], [182, 489], [186, 625]])} />
    <path d="M657 401h16v6h-16z" />
    <path d="M321 46L266 98M337 46L274 118M380 46V60M399 46L394 90M411 46L424 160M426 46V160M434 46L430 160M450 46L458 110M460 46L493 160M512 46L625 150M522 46L632 150M193 120L206 98M193 173L206 184M193 204L272 220M193 243L208 265M718 440L700 490L665 605M186 493L222 522M191 625H230" />

    <path d="M208 616V379H266V385H272M208 616H260M208 385H266M226 415H250V616H226zM232 415V616M244 415V616M208 577H260M208 583H260" />
    <path d="M226 418Q212 430 226 446M226 482Q212 500 226 516" />
    <g fill={hatch}>
      <path d={boxes([[260, 385, 271, 616], [272, 545, 296, 616], [218, 520, 258, 540], [229, 540, 247, 616], [296, 560, 540, 571], [790, 560, 1052, 571], [298, 573, 340, 604], [340, 576, 377, 604], [328, 604, 377, 698], [379, 526, 394, 560], [394, 517, 409, 540], [434, 517, 448, 540], [448, 526, 460, 560], [397, 576, 409, 668], [434, 576, 448, 668], [227, 622, 397, 643], [448, 622, 497, 643]])} />
      <path d="M475 643H485V726L710 841H888L1010 700L1022 700L892 851H706L475 736z" />
    </g>
    <path d={boxes([[319, 690, 386, 700], [328, 700, 377, 712], [337, 712, 367, 718], [409, 517, 434, 705], [406, 493, 436, 512], [394, 703, 448, 721], [406, 721, 436, 739], [925, 553, 962, 560]])} fill="#000" />
    <path d="M415 493V703M428 493V703M334 645H370M334 657H370M343 645V668M361 645V668" />
    <path d="M238 393V652M352 545V715M421 488V742" strokeDasharray="24 4 6 4" />
    <path d="M478 586V572H845V589M478 586H1040M466 740V602Q466 590 478 589M466 740L706 859H895L1067 672V572H1052M845 580H1067M540 572H497" />
    <path d={gear(661, 629, 147, 134, 50) + "z"} fill="#000" />
    <path d={gear(661, 629, 147, 134, 50) + "z"} fill={hatchB} />
    <circle cx="661" cy="629" r="24" fill="#000" /><circle cx="661" cy="629" r="24" fill={hatchB} />
    <path d="M512 629H812M661 468V786" />
    <path d="M720 440L665 605" stroke="#fff" />
    <circle cx="817" cy="736" r="69" fill="#000" />{rings(817, 736, [64, 59])}
    <path d={gear(817, 736, 55, 44, 24) + "z"} />
    <circle cx="817" cy="736" r="57" stroke={hatch} strokeWidth="3" /><path d="M752 736H902M817 660V814" />
    {rings(1012, 643, [50, 42, 26])}<circle cx="1012" cy="643" r="35" stroke={hatch} strokeWidth="5" /><path d="M960 643H1082M1012 596V692" />
  </g>
);

const RightViews = () => (
  <g transform="translate(880 540) scale(.33333)">
    <g fill={hatch}>
      <path d={boxes([[155, 55, 320, 67], [166, 70, 184, 110], [187, 85, 214, 163], [260, 85, 287, 163], [290, 70, 308, 130], [160, 133, 187, 355], [190, 270, 214, 355], [260, 270, 284, 355], [287, 270, 308, 355], [194, 190, 272, 272], [272, 163, 308, 205], [287, 130, 308, 163], [322, 163, 378, 180], [280, 192, 378, 206], [272, 254, 378, 268], [322, 282, 378, 298], [376, 127, 403, 170], [376, 292, 403, 334], [214, 338, 260, 346]])} />
      <path d={boxes([[526, 76, 686, 88], [527, 90, 545, 130], [668, 90, 686, 130], [505, 115, 556, 130], [584, 120, 629, 130], [656, 115, 706, 130], [556, 106, 584, 130], [629, 106, 656, 130], [508, 194, 526, 208], [526, 194, 545, 216], [556, 194, 584, 245], [629, 194, 656, 245], [668, 194, 686, 210], [686, 194, 706, 206]])} />
    </g>
    <path d={boxes([[118, 49, 155, 67], [320, 49, 355, 67], [376, 127, 418, 334], [112, 217, 121, 248], [133, 222, 142, 250], [145, 222, 154, 250], [306, 217, 320, 250], [325, 220, 335, 244], [358, 220, 367, 248], [214, 275, 256, 287], [214, 178, 256, 190], [200, 226, 220, 238], [270, 226, 290, 238], [484, 148, 493, 175]])} />
    <path d="M175 67V40H299V67M190 49H290M214 94H260M157 70V280M157 94H142L134 110M142 94V290H160M316 76V94H337V110M121 163V298H160M121 163H194V190M403 140H418M403 322H418M403 140V322M214 163H260M60 270H194M280 206V254H480M376 206V254M378 175H460M202 355V370H272V355M300 355L320 378M334 298V330L338 380M346 206V254M352 206V254M256 163V346M236 346L262 374M382 206V254" />
    <path d="M322 186H378M322 276H378" strokeWidth="3" />
    <path d="M131 112L140 104V185L131 175zM334 110H340L346 125V160H334z" fill="#fff" />
    <path d="M120 232H432" strokeDasharray="20 4 6 4" />
    <path d="M496 133H710M496 190H712" strokeWidth="2" />
    <path d="M496 133V190M496 157H712M496 163H712M499 190V266M499 262H712V190M592 256H650M584 205H629M584 215H629M584 225H629M656 206V250M685 216V247H697M665 210L744 238M544 90V115M668 90V115" />
    <path d="M529 133V190M541 133V190M574 133V190M626 133V190M680 133V190M709 133V190" strokeWidth="2" />
    <path d={marks([[324, 27], [378, 28], [400, 28], [499, 28], [540, 28], [567, 28], [633, 28], [86, 141], [86, 186], [464, 152], [464, 170], [464, 183], [744, 141], [744, 161], [744, 183], [744, 238], [731, 219], [697, 242], [576, 279], [627, 279], [636, 279], [688, 279], [264, 376], [305, 376], [322, 376], [333, 376], [237, 36], [640, 250]])} />
    <path d="M320 32L308 55M375 33L345 130M398 33L366 160M502 33L506 115M538 33L528 78M563 33L545 115M631 33L618 115M91 143L160 160M91 189L165 220M459 152L418 138M459 184L385 200M740 145L706 130M740 161H712M740 184L706 205M576 274L570 245M605 232L627 274M656 250L684 275M57 142V172H45V162" />
    <path d="M82 264H94V254H112M90 262H112V268H82M446 248H460V237H478M456 245H478V250H446M511 508H524V498H545M522 506H545V514H516" />
    <path d={boxes([[247, 538, 272, 548], [184, 559, 419, 569], [184, 583, 332, 593], [184, 604, 395, 614], [184, 625, 515, 635], [184, 649, 287, 659], [184, 670, 248, 680], [184, 691, 323, 701]])} />
    <path d={marks([[172, 564], [173, 585], [173, 606], [175, 630], [173, 651], [173, 672], [173, 695]])} />
  </g>
);

const PartsList = () => (
  <g>
    <path d={`M1130.500 500V834M1132.500 500V792M1135.500 500V792M1137.500 500V792M1140.500 500V792M1156.500 500V792M1160.500 500V800M1182.500 500V800M1209.500 500V800M1212.500 500V800M1214.500 500V792M1220.500 500V800M1227.500 500V800M${rows.map((y) => `1130 ${y + 0.5}H1240`).join("M")}M1130 792.500H1240M1130 800.500H1240`} />
    <path d="M1211.500 500V792" strokeWidth="2" />
    {rows.map((y, i) => {
      const w = Math.round(wave[i % wave.length] / 3);
      return (
        <g key={y} fill="#000">
          <path d={`M${1172.5 - Math.floor(w / 2)} ${y + 0.5}h${w}v3h-${w}zM${1191.5} ${y + 0.5}h7v3h-7z`} />
          {i % 4 === 2 && <path d={`M1141 ${y + 1.5}h15`} strokeWidth="2" />}
          <path d={`M1132.500 ${y + 0.5}h3v3h-3z`} />
        </g>
      );
    })}
    <g fill="#000"><path d="M1131.500 794.500h5v4h-5zM1145.500 794.500h6v4h-6zM1168.500 794.500h6v4h-6zM1193.500 794.500h6v4h-6zM1189.500 807.500h9v4h-9z" /></g>
    <path d="M1130 804.500H1179M1130 808.500H1179M1130 813.500H1179M1130 822.500H1179M1130 826.500H1179M1130 830.500H1179M1136.500 801V834M1148.500 801V813M1162.500 801V834M1169.500 801V834M1142.500 818V834M1154.500 818V834M1179.500 801V834M1179 817.500H1209M1209.500 801V834M1179 823.500H1240M1209 811.500H1240M1179 829.500H1209M1194.500 817V829M1183.500 824v5M1187.500 824v5M1191.500 824v5M1213.500 813v4M1216.500 813v4M1219.500 813v4M1223.500 813v4M1226.500 813v4M1229.500 813v4M1232.500 813v4M1223.500 818v4" />
    <path d="M1131 814h5v6h-5zM1136 815h10v2h-10zM1154 814h8v6h-8zM1148 815h6v2h-6zM1163 814h13v3h-13zM1131 827h4v6h-4zM1196 819h5v4h-5zM1203 819h5v8h-5zM1185 831h4v2h-4zM1191 830h6v3h-6zM1199 831h4v2h-4z" fill="#fff" />
  </g>
);

const tickX = [616.5, 706.5, 796.5, 886.5, 975.5, 1065.5, 1155.5];
const dashX = [571.5, 661.5, 751.5, 841.5, 931.5, 1021.5, 1111.5, 1201.5];
const tickY = [416.5, 501.5, 586.5, 671.5, 755.5];

const Drawing = () => (
  <svg viewBox="251 178 1110 803" className="size-full [&_*]:[vector-effect:non-scaling-stroke]" fill="none" stroke="#fff" strokeWidth="1" shapeRendering="crispEdges" role="img" aria-label="刮板运输机传动件 部装图">
    <defs>
      <pattern id="hatchA" width="9" height="9" patternUnits="userSpaceOnUse"><path d="M0 0h3v3H0zM3 3h3v3H3zM6 6h3v3H6z" fill="#fff" stroke="none" /></pattern>
      <pattern id="hatchB" width="9" height="9" patternUnits="userSpaceOnUse"><path d="M6 0h3v3H6zM3 3h3v3H3zM0 6h3v3H0z" fill="#fff" stroke="none" /></pattern>
    </defs>
    <path d="M526.500 331.500H1245.500V840.500H526.500zM541.500 338.500H887M891 337.500H1240M1239.500 342V834M541.500 338V835M526 834.500H1245M541.500 345.500H577.500V337" />
    <path d={tickX.map((x) => `M${x} 331V338M${x} 834V840`).join("") + dashX.map((x) => `M${x} 334V337M${x} 836V839`).join("") + tickY.map((y) => `M526 ${y}H541M1240 ${y}H1245`).join("")} />
    <path d="M886.500 330V341M886.500 831V841M534 373v3M534 458v3M534 543v3M534 627v3M534 712v3M534 764v3M1243 373v3M1243 458v3M1243 543v3" />
    <path d="M526 803.500H541M526 806.500H541M526 811.500H541M526 814.500H541M526 818.500H541M526 821.500H541M526 826.500H541M526 829.500H541M528.500 803v3M538.500 803v3M530.500 811v3M528.500 818v3M538.500 818v3M530.500 826v3" />
    <SideView />
    <EndViews />
    <LowerViews />
    <RightViews />
    <PartsList />
    <path d="M526.500 841V811M521 819.500L526.500 810L531.500 819.500M526 840.500H556M547 835L557 840.500L547 846" stroke="#f0f" />
  </svg>
);

/* ---------- sheets ---------- */

const Sheet = ({ label, active = false }: { label: string; active?: boolean }) => (
  <button type="button" className={`relative -mr-1 flex h-[17px] items-start justify-center ${active ? "z-10 w-12 text-[14px] leading-[14px] font-bold" : "w-[61px] text-[12px] leading-[15px]"} text-[#444]`}>
    <svg viewBox="0 0 60 17" preserveAspectRatio="none" className="absolute inset-0 size-full" aria-hidden="true"><path d="M.500 0L8 16.500H52L59.500 0" fill={active ? "#fff" : "#e9e9e9"} stroke="#999" vectorEffect="non-scaling-stroke" /></svg>
    <span className="relative">{label}</span>
  </button>
);

const navGlyphs: [string, string][] = [["首页", "M1.500 1v7M7 1v7L3 4.500z"], ["上一页", "M6 1v7L2 4.500z"], ["下一页", "M3 1v7l4-3.500z"], ["末页", "M7.500 1v7M2 1v7l4-3.500z"]];

const Canvas = () => (
  <main className="flex min-w-0 flex-1 flex-col">
    <div className="flex h-[22px] shrink-0 items-end">
      <svg viewBox="0 0 20 20" className="size-5" aria-hidden="true"><path d="M0 20L20 .500V20z" fill="#fff" /><path d="M0 20L20 .500" stroke="#999" /></svg>
      <div className="flex h-5 w-[233px] items-center justify-between rounded-tr-sm border-t border-r border-[#999] bg-white pr-[5px] pl-[15px]">
        <span className="pb-[2px] font-['Roboto','Noto_Sans_CJK_SC',sans-serif] text-[14px] leading-[17px] font-bold whitespace-nowrap text-[#444]">刮板运输机传动件 部装图.DWG</span>
        <button type="button" aria-label="关闭图纸"><svg viewBox="0 0 9 9" className="size-[9px]" stroke="#666" strokeWidth="1.500"><path d="M1 1l7 7M8 1L1 8" /></svg></button>
      </div>
    </div>
    <div className="min-h-0 flex-1 bg-black"><Drawing /></div>
    <div className="flex h-[17px] shrink-0 border-t border-[#777] font-['Open_Sans','Noto_Sans_CJK_SC',sans-serif]">
      <div className="flex w-[65px] items-center gap-[7px] pl-[2px]">
        {navGlyphs.map(([n, d]) => <button key={n} type="button" aria-label={n}><svg viewBox="0 0 9 9" className="size-[9px]" fill="#666" stroke="#666" strokeWidth=".8"><path d={d} /></svg></button>)}
      </div>
      <Sheet label="模型" active />
      <Sheet label="Layout1" />
      <Sheet label="Layout2" />
    </div>
  </main>
);

export default function App() {
  return (
    <div className="flex h-screen flex-col overflow-hidden bg-[#e5e5e5] font-['Noto_Sans_CJK_SC',sans-serif]">
      <Header />
      <Ribbon />
      <div className="flex min-h-0 flex-1">
        <div className="w-[26px] shrink-0 pt-[6px] pl-1">
          <button type="button" className="flex w-4 flex-col items-center gap-[2px] text-[#333]">
            <Icon><path d="M1 6V4h5M4 1.500L6.500 4 4 6.500" stroke="#111" strokeWidth="1.300" /><path d="M8 3h7M11.500 3v6M9 5h5M1 11.500h14v3H1zM6 13h4" stroke="#444" /></Icon>
            <span className="text-[12px] leading-[14px] [text-orientation:sideways] [writing-mode:vertical-rl]">图库</span>
          </button>
        </div>
        <Panel />
        <div className="w-[6px] shrink-0 border-l-2 border-[#efefef] bg-[#e0e0e0]" />
        <Canvas />
      </div>
      <footer className="flex h-[18px] shrink-0 text-[#777]">
        <div className="w-[29px] border-l border-dotted border-[#888] bg-[#eee]" />
      </footer>
    </div>
  );
}
